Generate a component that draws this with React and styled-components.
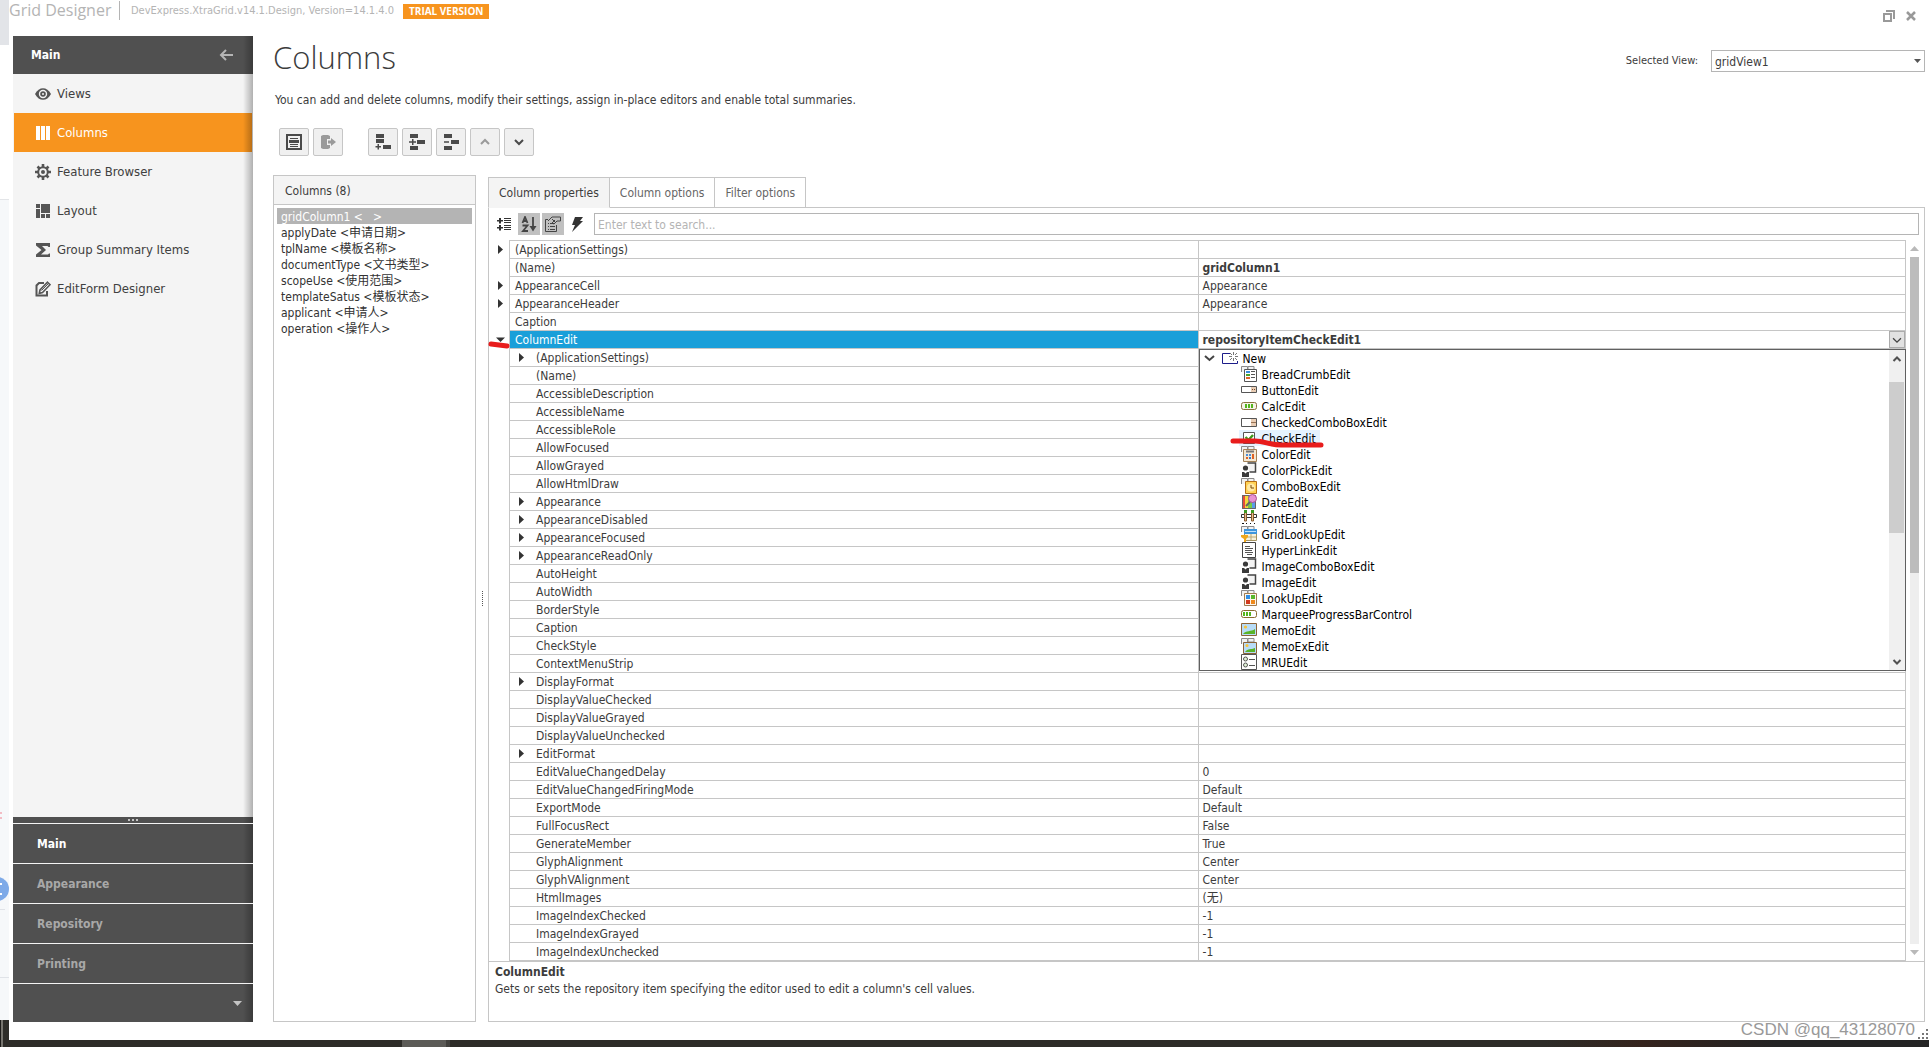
import React, { useState } from "react";
import styled, { createGlobalStyle, css } from "styled-components";

const navItems = [
  { label: "Views", icon: "eye" },
  { label: "Columns", icon: "columns" },
  { label: "Feature Browser", icon: "gear" },
  { label: "Layout", icon: "layout" },
  { label: "Group Summary Items", icon: "sigma" },
  { label: "EditForm Designer", icon: "edit" },
];

const groups = ["Main", "Appearance", "Repository", "Printing"];

const gridColumns = [
  "gridColumn1 <   >",
  "applyDate <申请日期>",
  "tplName <模板名称>",
  "documentType <文书类型>",
  "scopeUse <使用范围>",
  "templateSatus <模板状态>",
  "applicant <申请人>",
  "operation <操作人>",
];

const properties = [
  { name: "(ApplicationSettings)", expand: true },
  { name: "(Name)", value: "gridColumn1", bold: true },
  { name: "AppearanceCell", value: "Appearance", expand: true },
  { name: "AppearanceHeader", value: "Appearance", expand: true },
  { name: "Caption" },
  { name: "ColumnEdit", value: "repositoryItemCheckEdit1", bold: true, open: true },
  { name: "(ApplicationSettings)", expand: true, nested: true },
  { name: "(Name)", nested: true },
  { name: "AccessibleDescription", nested: true },
  { name: "AccessibleName", nested: true },
  { name: "AccessibleRole", nested: true },
  { name: "AllowFocused", nested: true },
  { name: "AllowGrayed", nested: true },
  { name: "AllowHtmlDraw", nested: true },
  { name: "Appearance", expand: true, nested: true },
  { name: "AppearanceDisabled", expand: true, nested: true },
  { name: "AppearanceFocused", expand: true, nested: true },
  { name: "AppearanceReadOnly", expand: true, nested: true },
  { name: "AutoHeight", nested: true },
  { name: "AutoWidth", nested: true },
  { name: "BorderStyle", nested: true },
  { name: "Caption", nested: true },
  { name: "CheckStyle", nested: true },
  { name: "ContextMenuStrip", nested: true },
  { name: "DisplayFormat", expand: true, nested: true },
  { name: "DisplayValueChecked", nested: true },
  { name: "DisplayValueGrayed", nested: true },
  { name: "DisplayValueUnchecked", nested: true },
  { name: "EditFormat", expand: true, nested: true },
  { name: "EditValueChangedDelay", value: "0", nested: true },
  { name: "EditValueChangedFiringMode", value: "Default", nested: true },
  { name: "ExportMode", value: "Default", nested: true },
  { name: "FullFocusRect", value: "False", nested: true },
  { name: "GenerateMember", value: "True", nested: true },
  { name: "GlyphAlignment", value: "Center", nested: true },
  { name: "GlyphVAlignment", value: "Center", nested: true },
  { name: "HtmlImages", value: "(无)", nested: true },
  { name: "ImageIndexChecked", value: "-1", nested: true },
  { name: "ImageIndexGrayed", value: "-1", nested: true },
  { name: "ImageIndexUnchecked", value: "-1", nested: true },
];

const editors = [
  { name: "BreadCrumbEdit", icon: "crumb" },
  { name: "ButtonEdit", icon: "button" },
  { name: "CalcEdit", icon: "calc" },
  { name: "CheckedComboBoxEdit", icon: "combo" },
  { name: "CheckEdit", icon: "check" },
  { name: "ColorEdit", icon: "keypad" },
  { name: "ColorPickEdit", icon: "person" },
  { name: "ComboBoxEdit", icon: "clock" },
  { name: "DateEdit", icon: "palette" },
  { name: "FontEdit", icon: "slider" },
  { name: "GridLookUpEdit", icon: "lookup" },
  { name: "HyperLinkEdit", icon: "page" },
  { name: "ImageComboBoxEdit", icon: "person" },
  { name: "ImageEdit", icon: "person" },
  { name: "LookUpEdit", icon: "tiles" },
  { name: "MarqueeProgressBarControl", icon: "progress" },
  { name: "MemoEdit", icon: "image" },
  { name: "MemoExEdit", icon: "imageEx" },
  { name: "MRUEdit", icon: "radio" },
];

// Drawings for the navigation bar, 16x16, painted with the current colour
const navIcons = {
  eye: (
    <>
      <path d="M0 8C2 4 5 2.200 8 2.200S14 4 16 8c-2 4-5 5.800-8 5.800S2 12 0 8z" />
      <circle cx="8" cy="8" r="4.200" fill="#f4f4f4" />
      <circle cx="8" cy="8" r="2.800" />
      <circle cx="8" cy="8" r="1" fill="#f4f4f4" />
    </>
  ),
  columns: <path d="M1 1h4v14H1zM6 1h4v14H6zM11 1h4v14h-4z" />,
  gear: (
    <>
      <g stroke="currentColor" strokeWidth="2.600">
        <path d="M8 0v16M0 8h16M2.500 2.500l11 11M13.500 2.500l-11 11" />
      </g>
      <circle cx="8" cy="8" r="5.800" />
      <circle cx="8" cy="8" r="3.800" fill="#f4f4f4" />
      <circle cx="8" cy="8" r="2" />
    </>
  ),
  layout: (
    <path d="M1 1h4v4H1zM1 6h4v9H1zM6 1h9v9H6zM6 11h4v4H6zM11 11h4v4h-4z" />
  ),
  sigma: <path d="M1 1h14v4h-1.500l-1-1H7l4 4-5 4.500h7l1-1H15V15H1v-2.500L6.500 8 1 3.500z" />,
  edit: (
    <>
      <path d="M9 2H4L1.500 4.500v10H12V10" fill="none" stroke="currentColor" strokeWidth="2" />
      <path d="M12.500 1.200l2.500 2.500L7.500 11.500l-3.200.8.700-3.300z" fill="#f4f4f4" stroke="currentColor" strokeWidth="1.600" />
      <path d="M6.500 9.500L13 3" stroke="currentColor" />
    </>
  ),
};

const toolIcons = {
  form: (
    <>
      <path d="M1 1h14v14H1z" fill="none" stroke="currentColor" strokeWidth="2" />
      <path d="M4 4h8v1H4zM3 6h10v3H3zM4 10h8v1H4zM4 12h8v1H4z" />
    </>
  ),
  exit: (
    <>
      <path d="M1 2l2-1h5l2 1v3H7v6h3v3l-2 1H3l-2-1z" />
      <path d="M8 6.500h3V4l5 4-5 4V9.500H8z" />
    </>
  ),
  append: <path d="M1 0h8v4H1zM1 5h8v4H1zM8 11h8v4H8zM2.500 10H4v2h2v1.500H4v2H2.500v-2H.5V12h2z" />,
  insert: <path d="M1 0h8v4H1zM1 12h8v4H1zM8 6h8v4H8zM3 5h1.500v2.200H7v1.600H4.500V11H3V8.800H0V7.200h3z" />,
  remove: <path d="M1 0h8v4H1zM1 12h8v4H1zM8 6h8v4H8zM1 7.200h5v1.600H1z" />,
  up: <path d="M4 10l4-4 4 4" fill="none" stroke="currentColor" strokeWidth="2" />,
  down: <path d="M4 6l4 4 4-4" fill="none" stroke="currentColor" strokeWidth="2" />,
};

const backPage = <path d="M.5 6V.5h6V6M7 .5h6V4H7z" fill="#f2f2f2" stroke="#8a8a8a" />;

const editorIcons = {
  crumb: (
    <>
      {backPage}
      <path d="M3.500 3.500h12v12h-12z" fill="#fff" stroke="#555" />
      <path d="M5 5h4v2H5z" fill="#3a8de0" />
      <path d="M5 8h4v2H5z" fill="#4ba32a" />
      <path d="M5 11h4v2H5z" fill="#e0642a" />
      <path d="M10 5.500h4M10 8.500h4M10 11.500h4" stroke="#555" />
    </>
  ),
  button: (
    <>
      <path d="M.5 4.500h15v6H.5z" fill="#fff" stroke="#555" />
      <path d="M10 5h5v5h-5z" fill="#e9cdb4" />
      <path d="M11 7h1v1h-1zM13 7h1v1h-1z" fill="#7a4a2a" />
    </>
  ),
  calc: (
    <>
      <rect x=".5" y="4.500" width="15" height="7" rx="2" fill="#f6f3e8" stroke="#8b7340" />
      <path d="M4 6h2v4H4zM7 6h2v4H7zM10 6h2v4h-2z" fill="#54b51e" />
    </>
  ),
  combo: (
    <>
      <path d="M.5 4.500h15v8H.5z" fill="#fff" stroke="#555" />
      <path d="M10 5h5v7h-5z" fill="#e9cdb4" />
      <path d="M10 8.500h5" stroke="#9a7354" />
    </>
  ),
  check: (
    <>
      <path d="M2.500 2.500h11v11h-11z" fill="#fff" stroke="#555" />
      <path d="M4.500 7l3 3L12 5" fill="none" stroke="#3b9a1c" strokeWidth="2.400" />
    </>
  ),
  keypad: (
    <>
      {backPage}
      <path d="M2.500 3.500h13v12h-13z" fill="#f4e8d4" stroke="#a38258" />
      <path d="M5 5.500h8" stroke="#777" strokeWidth="2" />
      <path d="M5 8h2v2H5zM8 8h2v2H8z" fill="#4c8fd8" />
      <path d="M11 8h2v5h-2zM5 11h2v2H5z" fill="#df6426" />
      <path d="M8 11h2v2H8z" fill="#3a78c8" />
    </>
  ),
  person: (
    <>
      <path d="M6.500 1h8v9h-6" fill="#f3f3f3" stroke="#444" strokeWidth="1.500" />
      <circle cx="4.500" cy="6" r="2.600" fill="#3a3a3a" />
      <path d="M1 10h2l1.500 1.500L6 10h2v5H1z" fill="#3a3a3a" />
    </>
  ),
  clock: (
    <>
      {backPage}
      <path d="M4.500 3.500h11v12h-11z" fill="#ffd255" stroke="#b77014" />
      <circle cx="10" cy="9.500" r="4" fill="#ffe9a6" />
      <path d="M10 7v3h3" fill="none" stroke="#7a4b08" />
    </>
  ),
  palette: (
    <>
      <path d="M1 1h3v14H1z" fill="#e64b3c" />
      <path d="M4 1h3v14H4z" fill="#f7d83a" />
      <path d="M7 1h4v14H7z" fill="#79c947" />
      <path d="M11 1h4v14h-4z" fill="#5b9be8" />
      <path d="M1.500 1.500h13v13h-13z" fill="none" stroke="#666" />
      <path d="M5 12l4-4" stroke="#666" strokeWidth="2" />
      <circle cx="11.500" cy="4.500" r="4" fill="#e892d2" stroke="#a84e93" />
    </>
  ),
  slider: (
    <>
      <path d="M.5 4.500h15v3H.5z" fill="#fff" stroke="#333" />
      <path d="M3.500 2h2v9h-2zM10.500 2h2v9h-2z" fill="#e0bd92" stroke="#8a5a2c" />
      <path d="M3 0h3v3H3zM10 0h3v3h-3z" fill="#3f9a24" />
      <path d="M1 13h2v1H1zM5 13h1v1H5zM9 13h1v1H9zM13 13h1v1h-1z" fill="#111" />
    </>
  ),
  lookup: (
    <>
      {backPage}
      <path d="M3.500 3.500h12v11h-12z" fill="#f7f1d9" stroke="#a4925f" />
      <path d="M3 3h13v5H3z" fill="#3e95dc" />
      <path d="M4 5h11v1H4z" fill="#bfe0f7" />
      <path d="M10 8v6M4 11h11" stroke="#b9a878" />
      <path d="M0 9h7v2l-2 2v3H3v-3L0 11z" fill="#f0a81c" />
    </>
  ),
  page: (
    <>
      <path d="M1.500.5h13v15h-13z" fill="#fff" stroke="#444" />
      <path d="M4 4h5v1H4zM4 6h8v1H4zM4 8h7v1H4zM4 10h8v1H4zM6 12h5v1H6z" fill="#555" />
    </>
  ),
  tiles: (
    <>
      {backPage}
      <path d="M3.500 3.500h12v12h-12z" fill="#fdf6ec" stroke="#a07c50" />
      <path d="M5 5h4v4H5z" fill="#2e8ee6" />
      <path d="M10 5h4v4h-4z" fill="#59b82b" />
      <path d="M5 10h4v4H5z" fill="#d23b1e" />
      <path d="M10 10h4v4h-4z" fill="#f08a1c" />
    </>
  ),
  progress: (
    <>
      <rect x=".5" y="4.500" width="15" height="7" rx="2" fill="#fff" stroke="#8b6b30" />
      <path d="M2 6h2v4H2zM5 6h2v4H5zM8 6h2v4H8z" fill="#54b51e" />
    </>
  ),
  image: (
    <>
      <path d="M.5 1.500h15v12H.5z" fill="#b8dcf6" stroke="#8b6336" />
      <circle cx="4.500" cy="5" r="1.600" fill="#f9c33a" />
      <path d="M2 12c3-4 8-2 12-5v5z" fill="#58b427" />
    </>
  ),
  imageEx: (
    <>
      {backPage}
      <path d="M2.500 4.500h13v11h-13z" fill="#b8dcf6" stroke="#8b6336" />
      <circle cx="6" cy="7.500" r="1.500" fill="#f9c33a" />
      <path d="M4 14c3-4 6-2 10-4v4z" fill="#58b427" />
    </>
  ),
  radio: (
    <>
      <path d="M.5.5h15v15H.5z" fill="#fff" stroke="#555" />
      <circle cx="4.500" cy="5" r="2" fill="#dff1d6" stroke="#555" />
      <circle cx="4.500" cy="11" r="2" fill="#dff1d6" stroke="#555" />
      <path d="M8 5h6v1H8zM8 11h6v1H8z" fill="#555" />
    </>
  ),
};

const Icon = ({ children, size = 16 }) => (
  <svg width={size} height={size} viewBox="0 0 16 16" fill="currentColor" aria-hidden="true">
    {children}
  </svg>
);

const Triangle = ({ open }) => (
  <svg width="9" height="9" viewBox="0 0 9 9" fill="#333" aria-hidden="true">
    <path d={open ? "M0 2.500h9L4.500 7z" : "M2 0l5 4.500L2 9z"} />
  </svg>
);

const EditorPopup = () => (
  <Popup>
    <PopupList>
      <PopupRoot>
        <svg width="11" height="16" viewBox="0 0 11 16" fill="none" stroke="#444" strokeWidth="2">
          <path d="M1 6l4.500 4L10 6" />
        </svg>
        <svg width="17" height="16" viewBox="0 0 17 16" fill="none">
          <path d="M8 3.500H.5v10h15V11" stroke="#1c1c8a" />
          <path d="M7 6.500h3M13 6.500h3M11.500 2v3M11.500 8v3M8 3l2 2M15 3l-2 2M8 10l2-2M15 10l-2-2" stroke="#777" />
        </svg>
        New
      </PopupRoot>
      {editors.map((editor) => (
        <PopupItem key={editor.name}>
          <PopupLabel $hot={editor.name === "CheckEdit"}>
            <Icon>{editorIcons[editor.icon]}</Icon>
            {editor.name}
          </PopupLabel>
          {editor.name === "CheckEdit" && (
            <ItemMark width="94" height="12" viewBox="0 0 94 12">
              <path d="M3 4h22c10 0 14 4 26 4h40" />
            </ItemMark>
          )}
        </PopupItem>
      ))}
    </PopupList>
    <PopupScroll>
      <Icon>
        <path d="M4.500 11L8 7.500l3.500 3.500" fill="none" stroke="#505050" strokeWidth="2" />
      </Icon>
      <PopupThumb />
      <Icon>
        <path d="M4.500 6L8 9.500 11.500 6" fill="none" stroke="#505050" strokeWidth="2" />
      </Icon>
    </PopupScroll>
  </Popup>
);

const PropertyRow = ({ item }) => (
  <tr>
    <Gutter>
      {(item.expand || item.open) && !item.nested && (
        <Expander aria-label={`Expand ${item.name}`}>
          <Triangle open={item.open} />
        </Expander>
      )}
      {item.open && (
        <GutterMark width="22" height="8" viewBox="0 0 22 8">
          <path d="M3 3l16 2" />
        </GutterMark>
      )}
    </Gutter>
    <NameCell $selected={item.open}>
      <NameBox $nested={item.nested}>
        {item.nested && (
          <NestedSlot>
            {item.expand && (
              <Expander aria-label={`Expand ${item.name}`}>
                <Triangle />
              </Expander>
            )}
          </NestedSlot>
        )}
        <CellText>{item.name}</CellText>
      </NameBox>
    </NameCell>
    <ValueCell $bold={item.bold}>
      <ValueBox>
        <CellText>{item.value}</CellText>
        {item.open && (
          <DropButton aria-label="Open editor list">
            <Icon size={14}>
              <path d="M3.500 6L8 10.500 12.500 6" fill="none" stroke="#444" strokeWidth="1.500" />
            </Icon>
          </DropButton>
        )}
      </ValueBox>
      {item.open && <EditorPopup />}
    </ValueCell>
  </tr>
);

const App = () => {
  const [view, setView] = useState("gridView1");
  const [search, setSearch] = useState("");

  return (
    <Desktop>
      <GlobalStyle />
      <Behind>
        <BehindTop />
        <BehindMiddle />
        <BehindPage>
          <svg width="9" height="790" viewBox="0 0 9 790" aria-hidden="true">
            <path d="M0 612h2v2H0zM0 617h2v2H0z" fill="#f3bcc4" />
            <circle cx="-3" cy="689" r="12" fill="#7eaae8" />
            <path d="M0 684h2M0 694h2" stroke="#fff" strokeWidth="2" />
            <path d="M0 709.500h5M0 777.500h9" stroke="#e0e3e8" />
          </svg>
        </BehindPage>
        <BehindBar />
      </Behind>
      <Window>
        <TitleBar>
          <AppTitle>Grid Designer</AppTitle>
          <Version>DevExpress.XtraGrid.v14.1.Design, Version=14.1.4.0</Version>
          <Trial>TRIAL VERSION</Trial>
          <WindowButtons>
            <WindowButton aria-label="Restore">
              <svg width="12" height="12" viewBox="0 0 12 12" fill="none" stroke="#999">
                <path d="M1 4h7v7H1z" strokeWidth="2" />
                <path d="M3 1h8v8" strokeWidth="2" />
              </svg>
            </WindowButton>
            <WindowButton aria-label="Close">
              <svg width="12" height="12" viewBox="0 0 12 12" fill="none" stroke="#999">
                <path d="M2 2l8 8M10 2l-8 8" strokeWidth="2.500" />
              </svg>
            </WindowButton>
          </WindowButtons>
        </TitleBar>

        <Body>
          <Sidebar>
            <SideHeader>
              Main
              <BackButton aria-label="Collapse">
                <svg width="14" height="12" viewBox="0 0 14 12" fill="none" stroke="#b5b5b5" strokeWidth="2">
                  <path d="M14 6H2M7 1L2 6l5 5" />
                </svg>
              </BackButton>
            </SideHeader>
            <Nav>
              {navItems.map((item) => (
                <NavItem key={item.label} $active={item.label === "Columns"}>
                  <Icon>{navIcons[item.icon]}</Icon>
                  {item.label}
                </NavItem>
              ))}
            </Nav>
            <SideSplitter>
              <svg width="10" height="2" viewBox="0 0 10 2" fill="#c4c4c4">
                <path d="M0 0h2v2H0zM4 0h2v2H4zM8 0h2v2H8z" />
              </svg>
            </SideSplitter>
            {groups.map((group) => (
              <GroupButton key={group} $active={group === "Main"}>
                {group}
              </GroupButton>
            ))}
            <GroupOverflow aria-label="More groups">
              <svg width="9" height="5" viewBox="0 0 9 5" fill="#c4c4c4">
                <path d="M0 0h9L4.500 5z" />
              </svg>
            </GroupOverflow>
          </Sidebar>

          <Content>
            <Heading>
              <h1>Columns</h1>
              <label htmlFor="view">Selected View:</label>
              <SelectBox>
                <select id="view" value={view} onChange={(e) => setView(e.target.value)}>
                  <option>gridView1</option>
                </select>
                <svg width="7" height="4" viewBox="0 0 7 4" fill="#555">
                  <path d="M0 0h7L3.500 4z" />
                </svg>
              </SelectBox>
            </Heading>
            <Intro>
              You can add and delete columns, modify their settings, assign in-place editors and enable total summaries.
            </Intro>
            <Tools>
              <ToolGroup>
                <ToolButton aria-label="Show form"><Icon>{toolIcons.form}</Icon></ToolButton>
                <ToolButton aria-label="Retrieve fields" disabled><Icon>{toolIcons.exit}</Icon></ToolButton>
              </ToolGroup>
              <ToolGroup>
                <ToolButton aria-label="Add column"><Icon>{toolIcons.append}</Icon></ToolButton>
                <ToolButton aria-label="Insert column"><Icon>{toolIcons.insert}</Icon></ToolButton>
                <ToolButton aria-label="Remove column"><Icon>{toolIcons.remove}</Icon></ToolButton>
                <ToolButton aria-label="Move up" disabled><Icon>{toolIcons.up}</Icon></ToolButton>
                <ToolButton aria-label="Move down"><Icon>{toolIcons.down}</Icon></ToolButton>
              </ToolGroup>
            </Tools>

            <Panels>
              <ColumnPanel>
                <PanelTitle>Columns (8)</PanelTitle>
                <ColumnList>
                  {gridColumns.map((column, i) => (
                    <ColumnItem key={column} $selected={i === 0}>{column}</ColumnItem>
                  ))}
                </ColumnList>
              </ColumnPanel>
              <Splitter>
                <svg width="1" height="15" viewBox="0 0 1 15" shapeRendering="crispEdges">
                  <path d="M.5 0v15" stroke="#555" strokeDasharray="1 1" />
                </svg>
              </Splitter>
              <PropertyArea>
                <Tabs>
                  <Tab $active>Column properties</Tab>
                  <Tab>Column options</Tab>
                  <Tab>Filter options</Tab>
                  <TabRest />
                </Tabs>
                <PropertyPanel>
                  <PropertyTools>
                    <SmallTool aria-label="Categorized">
                      <Icon>
                        <path d="M0 4h2V2h2v2h2v1.500H4v2H2v-2H0zM0 11h2V9h2v2h2v1.500H4v2H2v-2H0z" />
                        <path d="M7 2h7v1H7zM7 4h7v1H7zM7 6h7v1H7zM7 9h7v1H7zM7 11h7v1H7zM7 13h7v1H7z" />
                      </Icon>
                    </SmallTool>
                    <SmallTool aria-label="Alphabetical" $pressed>
                      <svg width="16" height="16" viewBox="0 0 16 16" fill="none" stroke="#444" strokeWidth="1.800">
                        <path d="M1.500 7l2.500-6 2.500 6M2.500 5h3M1.500 9.500h5L2 15h5M12 1v12" />
                        <path d="M8.500 10h7L12 15.500z" fill="#444" stroke="none" />
                      </svg>
                    </SmallTool>
                    <SmallTool aria-label="Properties" $pressed>
                      <svg width="18" height="18" viewBox="0 0 18 18" fill="none" stroke="#444">
                        <path d="M4 4.500H1.500v12h11V10" />
                        <path d="M4 8.500h1M6 8.500h5M4 11.500h1M6 11.500h5M4 14.500h1M6 14.500h5" />
                        <path d="M4 6l4-4h8.500v4H13l-3 3-2-1 3-3M8 4l4 4" />
                      </svg>
                    </SmallTool>
                    <SmallTool aria-label="Events">
                      <Icon>
                        <path d="M6 1h8l-3 4h3L3 16l3-7H3z" />
                      </Icon>
                    </SmallTool>
                    <Search
                      aria-label="Search"
                      value={search}
                      onChange={(e) => setSearch(e.target.value)}
                      placeholder="Enter text to search..."
                    />
                  </PropertyTools>
                  <GridArea>
                    <PropertyTable>
                      <colgroup>
                        <GutterCol />
                        <col />
                        <ValueCol />
                      </colgroup>
                      <tbody>
                        {properties.map((item, i) => (
                          <PropertyRow key={i} item={item} />
                        ))}
                      </tbody>
                    </PropertyTable>
                    <ScrollBar>
                      <ScrollArrow>
                        <svg width="9" height="5" viewBox="0 0 9 5" fill="#b9b9b9"><path d="M0 5h9L4.500 0z" /></svg>
                      </ScrollArrow>
                      <ScrollTrack>
                        <ScrollThumb />
                      </ScrollTrack>
                      <ScrollArrow>
                        <svg width="9" height="5" viewBox="0 0 9 5" fill="#b9b9b9"><path d="M0 0h9L4.500 5z" /></svg>
                      </ScrollArrow>
                    </ScrollBar>
                  </GridArea>
                  <Hint>
                    <b>ColumnEdit</b>
                    <p>Gets or sets the repository item specifying the editor used to edit a column's cell values.</p>
                  </Hint>
                </PropertyPanel>
              </PropertyArea>
            </Panels>
          </Content>
        </Body>
        <Watermark>CSDN @qq_43128070</Watermark>
        <Grip width="11" height="11" viewBox="0 0 11 11" fill="#777">
          <path d="M8 0h2v2H8zM4 4h2v2H4zM8 4h2v2H8zM0 8h2v2H0zM4 8h2v2H4zM8 8h2v2H8z" />
        </Grip>
      </Window>
      <TaskBar>
        <TaskButton />
      </TaskBar>
    </Desktop>
  );
};

const GlobalStyle = createGlobalStyle`
  * {
    box-sizing: border-box;
  }
  body {
    margin: 0;
    background: #fff;
    color: #3c3c3c;
    font-family: "DejaVu Sans Condensed", "Noto Sans CJK SC", sans-serif;
    font-size: 12px;
    line-height: 16px;
  }
  button, input, select {
    font: inherit;
    color: inherit;
    margin: 0;
    padding: 0;
    border: none;
    border-radius: 0;
    background: none;
  }
  h1, p, ul {
    margin: 0;
    padding: 0;
  }
  ul {
    list-style: none;
  }
  svg {
    display: block;
    flex: none;
  }
`;

const edgeShade = css`
  position: relative;
  &::after {
    content: "";
    position: absolute;
    top: 0;
    right: 0;
    bottom: 0;
    width: 10px;
    pointer-events: none;
    background: linear-gradient(to right, rgba(0, 0, 0, 0), rgba(0, 0, 0, 0.28));
  }
`;

const Desktop = styled.div`
  min-height: 100vh;
  display: grid;
  grid-template-columns: 9px minmax(0, 1fr);
  grid-template-rows: 1fr 7px;
  overflow: hidden;
`;
const Behind = styled.div`
  grid-row: 1 / 3;
  display: flex;
  flex-direction: column;
`;
const BehindTop = styled.div`
  height: 45px;
  background: #e2e4e8;
`;
const BehindMiddle = styled.div`
  height: 155px;
  border-bottom: 1px solid #e3e5e8;
`;
const BehindPage = styled.div`
  flex: 1;
  background: #f6f8fa;
`;
const BehindBar = styled.div`
  height: 27px;
  background: #2d2c28;
  border-left: 1px solid #1b1a18;
  box-shadow: inset 2px 0 #77756f;
`;
const Window = styled.div`
  position: relative;
  display: flex;
  flex-direction: column;
  background: #fff;
`;
const TaskBar = styled.div`
  background: linear-gradient(to right, #2d2c28 80%, #35241d 85%, #242424 92%);
`;
const TaskButton = styled.div`
  width: 48px;
  height: 7px;
  margin-left: 393px;
  background: #5c5b57;
  border-right: 4px solid #42413d;
`;

const TitleBar = styled.header`
  display: flex;
  align-items: flex-start;
  height: 36px;
  color: #b4b4b4;
`;
const AppTitle = styled.div`
  width: 111px;
  height: 19px;
  margin-top: 1px;
  border-right: 1px solid #b4b4b4;
  font-family: "Open Sans", sans-serif;
  font-size: 16px;
  line-height: 18px;
  white-space: nowrap;
`;
const Version = styled.div`
  margin: 3px 9px 0 11px;
  font-size: 11px;
  white-space: nowrap;
`;
const Trial = styled.div`
  height: 15px;
  margin-top: 4px;
  padding: 0 6px;
  background: #f7941e;
  color: #fff;
  font-family: "Open Sans", sans-serif;
  font-size: 10px;
  font-weight: 700;
  line-height: 15px;
`;
const WindowButtons = styled.div`
  display: flex;
  gap: 10px;
  margin: 10px 12px 0 auto;
`;
const WindowButton = styled.button`
  width: 12px;
  height: 12px;
`;

const Body = styled.div`
  flex: 1;
  display: flex;
  gap: 20px;
  padding: 0 4px 18px 4px;
`;
const Sidebar = styled.aside`
  flex: none;
  width: 240px;
  display: flex;
  flex-direction: column;
  font-size: 13px;
`;
const SideHeader = styled.div`
  ${edgeShade}
  display: flex;
  align-items: center;
  justify-content: space-between;
  height: 38px;
  padding: 0 20px 0 18px;
  background: #505050;
  color: #fff;
  font-size: 12px;
  font-weight: 700;
`;
const BackButton = styled.button`
  cursor: pointer;
`;
const Nav = styled.nav`
  ${edgeShade}
  flex: 1;
  display: flex;
  flex-direction: column;
  padding: 0 1px;
  background: #f4f4f4;
`;
const NavItem = styled.button`
  display: flex;
  align-items: center;
  gap: 6px;
  height: 39px;
  padding-left: 21px;
  text-align: left;
  cursor: pointer;
  color: ${(props) => (props.$active ? "#fff" : "#404040")};
  background: ${(props) => (props.$active ? "#f7941e" : "none")};
  svg {
    color: ${(props) => (props.$active ? "#fff" : "#555")};
  }
`;
const SideSplitter = styled.div`
  ${edgeShade}
  display: flex;
  justify-content: center;
  height: 6px;
  padding-top: 2px;
  background: #505050;
`;
const GroupButton = styled.button`
  ${edgeShade}
  height: 40px;
  padding-left: 24px;
  border-top: 1px solid #f4f4f4;
  background: #505050;
  color: ${(props) => (props.$active ? "#fff" : "#a8a8a8")};
  font-size: 12px;
  font-weight: 700;
  text-align: left;
  cursor: pointer;
`;
const GroupOverflow = styled.button`
  ${edgeShade}
  display: flex;
  align-items: center;
  justify-content: flex-end;
  height: 39px;
  padding-right: 11px;
  border-top: 1px solid #f4f4f4;
  background: #505050;
`;

const Content = styled.main`
  flex: 1;
  min-width: 0;
  display: flex;
  flex-direction: column;
`;
const Heading = styled.div`
  display: flex;
  align-items: flex-start;
  height: 50px;
  h1 {
    flex: 1;
    font-family: "Open Sans", sans-serif;
    font-size: 31px;
    font-weight: 300;
    line-height: 42px;
  }
  label {
    padding-top: 17px;
    font-size: 11px;
  }
`;
const SelectBox = styled.div`
  position: relative;
  width: 214px;
  margin: 14px 0 0 13px;
  select {
    display: block;
    width: 100%;
    height: 22px;
    padding: 1px 0 0 3px;
    border: 1px solid #b5b5b5;
    appearance: none;
  }
  svg {
    position: absolute;
    top: 9px;
    right: 4px;
    pointer-events: none;
  }
`;
const Intro = styled.p`
  padding: 6px 0 20px 2px;
`;
const Tools = styled.div`
  display: flex;
  gap: 25px;
  padding: 0 0 19px 6px;
`;
const ToolGroup = styled.div`
  display: flex;
  gap: 4px;
`;
const ToolButton = styled.button`
  display: flex;
  align-items: center;
  justify-content: center;
  width: 30px;
  height: 28px;
  border: 1px solid #c6c6c6;
  border-radius: 2px;
  background: #f0f0f0;
  color: #4a4a4a;
  cursor: pointer;
  &:disabled {
    color: #9a9a9a;
  }
`;

const Panels = styled.div`
  flex: 1;
  display: flex;
`;
const ColumnPanel = styled.section`
  flex: none;
  width: 203px;
  border: 1px solid #c6c6c6;
`;
const PanelTitle = styled.div`
  height: 29px;
  padding: 7px 0 0 11px;
  border-bottom: 1px solid #c6c6c6;
  background: #f4f4f4;
`;
const ColumnList = styled.ul`
  padding: 3px;
`;
const ColumnItem = styled.li`
  height: 16px;
  padding-left: 4px;
  line-height: 18px;
  white-space: pre;
  color: ${(props) => (props.$selected ? "#fff" : "#333")};
  background: ${(props) => (props.$selected ? "#b4b4b4" : "none")};
`;
const Splitter = styled.div`
  flex: none;
  width: 12px;
  display: flex;
  align-items: center;
  justify-content: center;
`;

const PropertyArea = styled.section`
  flex: 1;
  min-width: 0;
  display: flex;
  flex-direction: column;
  padding-top: 2px;
`;
const Tabs = styled.div`
  display: flex;
  height: 31px;
`;
const Tab = styled.button`
  padding: 0 10px;
  border: 1px solid #c6c6c6;
  border-left-width: ${(props) => (props.$active ? "1px" : "0")};
  border-bottom-color: ${(props) => (props.$active ? "#f4f4f4" : "#c6c6c6")};
  background: ${(props) => (props.$active ? "#f4f4f4" : "#fff")};
  color: ${(props) => (props.$active ? "#3c3c3c" : "#666")};
`;
const TabRest = styled.div`
  flex: 1;
  border-bottom: 1px solid #c6c6c6;
`;
const PropertyPanel = styled.div`
  flex: 1;
  display: flex;
  flex-direction: column;
  border: 1px solid #c6c6c6;
  border-top: none;
`;
const PropertyTools = styled.div`
  display: flex;
  gap: 2px;
  padding: 5px;
`;
const SmallTool = styled.button`
  display: flex;
  align-items: center;
  justify-content: center;
  width: 22px;
  height: 22px;
  color: #333;
  background: ${(props) => (props.$pressed ? "#c0c0c0" : "none")};
`;
const Search = styled.input`
  flex: 1;
  height: 22px;
  margin-left: 4px;
  padding: 1px 3px 0;
  border: 1px solid #b5b5b5;
  outline: none;
  &::placeholder {
    color: #b4b4b4;
    opacity: 1;
  }
`;
const GridArea = styled.div`
  display: flex;
  gap: 4px;
  padding-right: 5px;
`;
const PropertyTable = styled.table`
  flex: 1;
  min-width: 0;
  width: 100%;
  table-layout: fixed;
  border-collapse: separate;
  border-spacing: 0;
  td {
    height: 18px;
    padding: 0;
    white-space: nowrap;
  }
  tr:last-child td + td {
    height: 19px;
    border-bottom: 1px solid #c6c6c6;
  }
`;
const GutterCol = styled.col`
  width: 20px;
`;
const ValueCol = styled.col`
  width: 50%;
`;
const Gutter = styled.td`
  position: relative;
`;
const Expander = styled.button`
  display: flex;
  align-items: center;
  justify-content: center;
  width: 22px;
  height: 17px;
`;
const NameCell = styled.td`
  border-top: 1px solid #c6c6c6;
  border-left: 1px solid #c6c6c6;
  color: ${(props) => (props.$selected ? "#fff" : "inherit")};
  background: ${(props) => (props.$selected ? "#1a9fd9" : "none")};
`;
const NameBox = styled.div`
  display: flex;
  height: 17px;
  padding-left: ${(props) => (props.$nested ? "0" : "5px")};
`;
const NestedSlot = styled.span`
  width: 26px;
`;
const CellText = styled.span`
  padding-top: 1px;
`;
const ValueCell = styled.td`
  position: relative;
  border: 1px solid #c6c6c6;
  border-bottom: none;
  font-weight: ${(props) => (props.$bold ? 700 : 400)};
`;
const ValueBox = styled.div`
  display: flex;
  justify-content: space-between;
  height: 17px;
  padding-left: 4px;
`;
const DropButton = styled.button`
  display: flex;
  align-items: center;
  justify-content: center;
  width: 16px;
  height: 17px;
  border: 1px solid #ababab;
  background: #e1e1e1;
`;

const Popup = styled.div`
  position: absolute;
  top: 18px;
  left: 0;
  right: -1px;
  z-index: 2;
  display: flex;
  border: 1px solid #606060;
  background: #fff;
  color: #000;
  font-weight: 400;
  line-height: 18px;
`;
const PopupList = styled.ul`
  flex: 1;
`;
const PopupRoot = styled.li`
  display: flex;
  height: 16px;
  padding-left: 4px;
  svg + svg {
    margin: 0 4px 0 7px;
  }
`;
const PopupItem = styled.li`
  position: relative;
  display: flex;
  height: 16px;
  padding-left: 39px;
`;
const PopupLabel = styled.span`
  display: flex;
  gap: 5px;
  height: 16px;
  padding: 0 4px 0 2px;
  background: ${(props) => (props.$hot ? "#e5f3ff" : "none")};
`;
const PopupScroll = styled.div`
  display: flex;
  flex-direction: column;
  width: 16px;
  background: #f0f0f0;
`;
const PopupThumb = styled.div`
  height: 151px;
  margin: 16px 1px auto 0;
  background: #cdcdcd;
`;
const ItemMark = styled.svg`
  position: absolute;
  top: 7px;
  left: 30px;
  fill: none;
  stroke: #e81c1c;
  stroke-width: 5;
  stroke-linecap: round;
`;
const GutterMark = styled.svg`
  position: absolute;
  top: 11px;
  left: -1px;
  z-index: 1;
  fill: none;
  stroke: #e81c1c;
  stroke-width: 5;
  stroke-linecap: round;
`;

const ScrollBar = styled.div`
  display: flex;
  flex-direction: column;
  width: 9px;
`;
const ScrollArrow = styled.div`
  display: flex;
  align-items: center;
  height: 17px;
`;
const ScrollTrack = styled.div`
  flex: 1;
  background: #eee;
`;
const ScrollThumb = styled.div`
  height: 46%;
  background: #bcbcbc;
`;
const Hint = styled.div`
  flex: 1;
  padding: 2px 6px;
  border-top: 1px solid #c6c6c6;
  line-height: 17px;
`;
const Watermark = styled.div`
  position: absolute;
  right: 14px;
  bottom: 0;
  color: #999;
  font-family: "Liberation Sans", sans-serif;
  font-size: 17px;
  line-height: 20px;
`;
const Grip = styled.svg`
  position: absolute;
  right: 0;
  bottom: 0;
`;

export default App;
